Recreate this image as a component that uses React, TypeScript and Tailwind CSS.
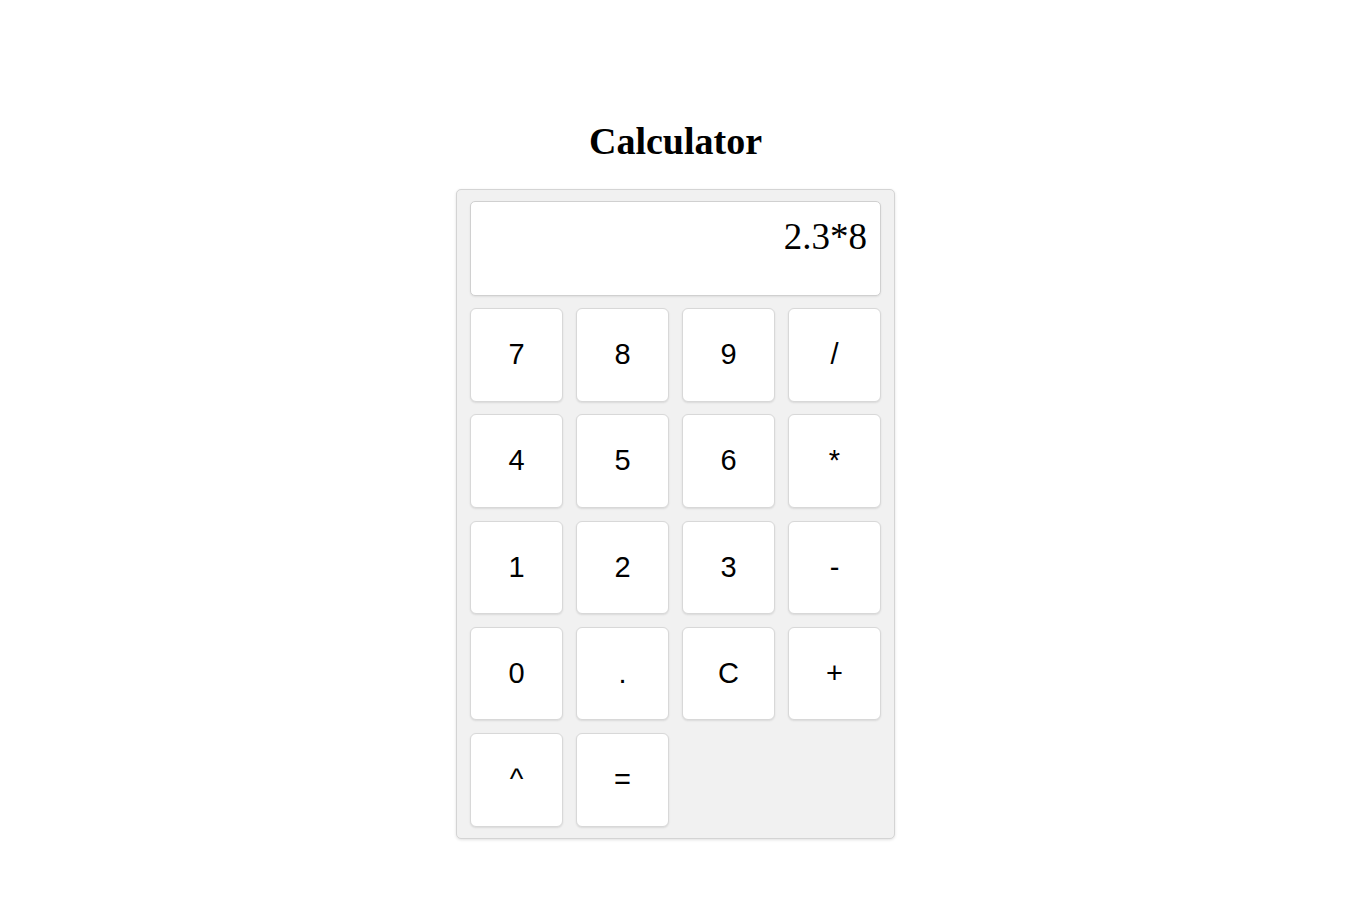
export default function App() {
  const keys = ["7", "8", "9", "/", "4", "5", "6", "*", "1", "2", "3", "-", "0", ".", "C", "+", "^", "="]

  return (
    <div className="min-h-screen bg-white flex flex-col items-center pt-[120px] pr-[6px]">
      {/* Title */}
      <h1 className="font-['Liberation_Serif',serif] font-bold text-[38px] leading-[42px] text-black mb-[27px]">
        Calculator
      </h1>

      {/* Calculator body */}
      <div className="w-[439px] bg-[#f1f1f1] border border-[#d4d4d4] rounded-[5px] px-[13px] py-[11px] shadow-[0_1px_3px_rgba(0,0,0,0.12)]">
        {/* Display */}
        <div className="h-[95px] bg-white border border-[#d0d0d0] rounded-[5px] mb-[12px] px-[13px] pt-[14px] text-right font-['Liberation_Serif',serif] text-[37px] leading-[41px] text-black shadow-[0_1px_2px_rgba(0,0,0,0.08)]">
          2.3*8
        </div>

        {/* Keys */}
        <div className="grid grid-cols-4 gap-x-[13px] gap-y-[12.75px]">
          {keys.map((k) => (
            <button
              key={k}
              className="h-[93.5px] bg-white border border-[#d8d8d8] rounded-[6px] flex items-center justify-center font-['Liberation_Sans',Arial,sans-serif] text-[29px] text-black shadow-[0_1px_2px_rgba(0,0,0,0.1)]"
            >
              {k}
            </button>
          ))}
        </div>
      </div>
    </div>
  )
}
